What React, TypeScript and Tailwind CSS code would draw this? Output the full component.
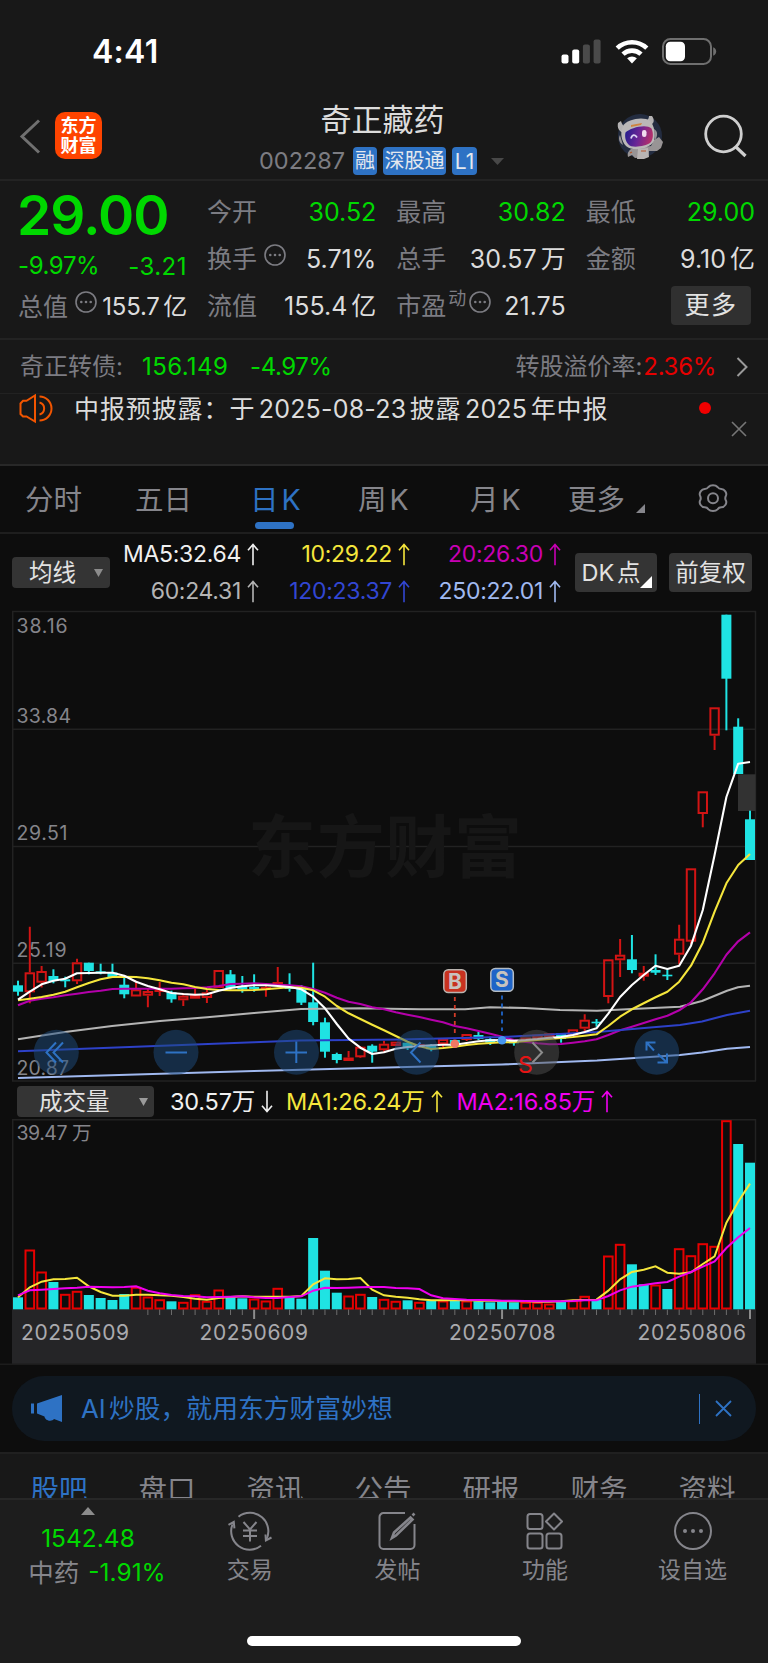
import type { ReactNode } from "react";
import { clsx } from "clsx";

const FIRST_X = 18;
const STEP = 732 / 62;
const barX = (i: number) => FIRST_X + i * STEP;

// [direction, high, body top, body bottom, low] in chart pixels
type Candle = ["u" | "d", number, number, number, number];

const candles: Candle[] = [
  ["d", 980.7, 985.3, 991.7, 995.7],
  ["u", 926.7, 972.3, 992.3, 1003.3],
  ["u", 966, 971, 982.7, 987.5],
  ["d", 969.3, 976, 981, 983.3],
  ["d", 976.7, 979.3, 981.3, 987.3],
  ["u", 958.7, 962.3, 981.3, 984],
  ["d", 962.7, 962.7, 971, 974.3],
  ["d", 963.7, 971.3, 973.3, 974.3],
  ["d", 963.7, 972.5, 977.3, 977.3],
  ["d", 977.3, 984.7, 994.3, 998.3],
  ["u", 980.7, 989.3, 996.5, 996.5],
  ["u", 988.3, 991, 995.7, 1007.3],
  ["u", 982, 989, 992, 996],
  ["d", 990.7, 992.3, 999.3, 1002.7],
  ["u", 993.3, 995.7, 1000.3, 1006],
  ["u", 987.7, 995, 998.7, 998.7],
  ["u", 989.3, 992.3, 998, 1003],
  ["u", 970, 970, 988, 988],
  ["d", 970, 974.3, 988.3, 990],
  ["d", 976, 986, 989.3, 992.7],
  ["d", 974.3, 987, 989, 991.7],
  ["u", 985, 987, 989.5, 996.7],
  ["u", 967, 982, 984, 984],
  ["d", 973.3, 987, 989, 991.7],
  ["d", 985, 989, 1002.7, 1005],
  ["d", 962.7, 1002.3, 1022, 1025.3],
  ["d", 1017.7, 1022.3, 1051.7, 1057.7],
  ["d", 1052.7, 1054, 1060, 1063.3],
  ["u", 1051, 1057.5, 1061, 1061],
  ["u", 1046, 1046.7, 1057.3, 1058],
  ["d", 1044.3, 1045.7, 1051.7, 1062.7],
  ["u", 1040.7, 1043.7, 1050.3, 1053],
  ["u", 1041.7, 1041.7, 1046, 1046],
  ["d", 1042.7, 1042.7, 1048.3, 1050],
  ["u", 1043, 1044, 1047, 1048],
  ["d", 1044, 1045.7, 1049.3, 1051.3],
  ["u", 1038.5, 1039, 1044.3, 1047.3],
  ["d", 1040, 1040, 1046, 1046],
  ["u", 1034, 1034, 1040, 1041],
  ["d", 1032, 1035, 1039, 1040],
  ["d", 1036.7, 1039, 1042.7, 1045],
  ["d", 1038, 1039.3, 1042.7, 1044],
  ["d", 1040, 1041, 1043.3, 1045.7],
  ["u", 1037.5, 1037.5, 1040.5, 1041],
  ["u", 1034.7, 1034.7, 1039, 1039],
  ["u", 1033.3, 1033.3, 1037.3, 1037.3],
  ["d", 1033, 1033.3, 1039, 1042.7],
  ["u", 1029.3, 1029.3, 1035.7, 1036],
  ["u", 1014.3, 1019.7, 1028.7, 1031],
  ["d", 1019, 1021.7, 1023.3, 1026.7],
  ["u", 959.3, 959.3, 997, 1003.3],
  ["u", 939, 954.7, 960.3, 977],
  ["d", 935, 959.3, 970, 973.3],
  ["u", 966, 972.7, 976.7, 980.7],
  ["d", 954.3, 970, 972.7, 975],
  ["d", 969.3, 974.7, 976.3, 980],
  ["u", 924.7, 938.7, 954.7, 964.3],
  ["u", 868.3, 868.3, 941.7, 944],
  ["u", 791.3, 791.3, 814, 827.3],
  ["u", 707.3, 707.3, 735.7, 750],
  ["d", 614.7, 614.7, 678.7, 730.3],
  ["d", 718.3, 726.7, 774, 774],
  ["d", 810.7, 819.3, 860, 860],
];

const ma5 = [
  999.7, 991.7, 984.3, 980.7, 978.7, 973.3, 973, 972.7, 972.7, 975.7, 981.7, 986, 989.3, 993, 994, 994.7, 994.3,
  990.7, 988, 986.3, 985.3, 985.3, 986, 987, 989.3, 996.7, 1008.3, 1024, 1038.7, 1047.7, 1054, 1052.3, 1048.7, 1047,
  1046, 1045.3, 1044.7, 1044.7, 1043, 1041.3, 1040.3, 1040, 1040.7, 1040, 1039, 1037.7, 1037, 1035, 1032, 1028.3,
  1013.7, 997, 985, 975, 965.7, 969, 965.7, 945.7, 910, 855, 797, 763.7, 762,
];

const ma10 = [
  1000.3, 998.7, 997, 994.7, 991.7, 987.3, 983, 979.3, 977, 976.7, 977, 978.3, 980.3, 982.7, 984.3, 987, 989, 990,
  990.3, 990.3, 990, 989.3, 988.3, 987.3, 987.7, 990.3, 996.7, 1006, 1013.3, 1019, 1024.7, 1030.3, 1036, 1041.7,
  1046.3, 1049, 1048, 1046.7, 1045, 1043.7, 1043, 1042.3, 1042.3, 1041, 1040, 1039, 1038, 1037, 1035.7, 1034.3, 1026,
  1016.7, 1009.3, 1003.3, 997.3, 991.7, 981.7, 965.7, 942.7, 911.7, 883.3, 865, 854,
];

const ma20 = [
  1005.3, 1000.7, 998.7, 997.3, 995.3, 993.7, 992, 990.7, 989, 988.7, 988.7, 988.7, 988.7, 988.7, 988.3, 988, 987.3,
  986, 984, 983.7, 983.3, 984, 984.7, 985.3, 986.3, 989, 992.7, 997.7, 1001.7, 1004, 1007.3, 1009.3, 1012.3, 1014.7,
  1017, 1019.7, 1022.3, 1026, 1028.3, 1031, 1033.7, 1036.7, 1040, 1042, 1043.3, 1044.3, 1044, 1042.7, 1041.3, 1039.3,
  1035, 1030.3, 1026.7, 1023, 1019.3, 1015.7, 1010.3, 1002.3, 989.3, 973.3, 954.7, 941.3, 932.3,
];

const ma60 =
  "18,1039.3 65,1032 112,1026 160,1021 207,1017.3 254,1013 301,1009 360,1008.3 420,1009.3 465,1009.3 490,1007.3 525,1008 560,1010 597,1010.7 632,1009 680,1006.7 702,1001 727,990.7 738,987.3 750,985.7";
const ma120 = "18,1051.3 254,1042.3 300,1040.5 400,1039.5 502,1037 597,1032 680,1025 702,1021.5 727,1015 750,1010.7";
const ma250 = "18,1078 254,1071 502,1064.5 597,1060.5 680,1055 702,1052.5 727,1048.8 750,1047";

// top edge of each volume bar
const volumes = [
  1297.3, 1250, 1272, 1282, 1294.3, 1291.3, 1295, 1298, 1300, 1294, 1287.3, 1297, 1299.7, 1301.3, 1302.3, 1294.7,
  1301.3, 1290, 1297.3, 1298.3, 1299, 1301, 1288.3, 1296.7, 1298.7, 1238, 1270.7, 1292.7, 1296, 1294.3, 1297, 1299.3,
  1301.3, 1300.3, 1302.3, 1301, 1301, 1301, 1301, 1301.3, 1302.3, 1301.3, 1302.3, 1302.3, 1302.3, 1304, 1302, 1300.7,
  1296.3, 1300, 1256, 1244.3, 1264.3, 1284.3, 1285, 1289, 1248.7, 1255.7, 1243.7, 1246.3, 1120.7, 1144, 1162.7,
];
// 1 = hollow red bar, 0 = filled
const volumeFlags = [
  0, 1, 1, 0, 1, 1, 0, 0, 0, 0, 1, 1, 1, 0, 1, 1, 1, 1, 0, 0, 1, 1, 1, 0, 0, 0, 0, 0, 1, 1, 0, 1, 1, 0, 1, 0, 1, 0, 1,
  0, 0, 0, 0, 1, 1, 1, 0, 1, 1, 0, 1, 1, 0, 0, 1, 0, 1, 1, 1, 1, 1, 0, 0,
];

// volume averages, offsets from the panel header at @3x
const volMa1 = [
  652, 622, 605, 598, 597, 593, 619, 636, 647, 647, 644, 644, 646, 647, 651, 656, 659, 654, 651, 649, 650, 650, 650,
  650, 648, 613, 595, 598, 597, 594, 629, 646, 650, 653, 658, 661, 661, 661, 660, 662, 662, 663, 664, 664, 665, 665,
  664, 661, 660, 659, 632, 598, 576, 569, 559, 578, 581, 577, 552, 529, 428, 365, 311,
];
const volMa2 = [
  646, 631, 629, 627, 625, 623, 620, 621, 622, 621, 619, 632, 640, 645, 648, 649, 652, 651, 650, 649, 652, 654, 654,
  651, 649, 632, 623, 624, 623, 622, 621, 621, 624, 625, 627, 646, 655, 657, 659, 660, 661, 662, 662, 663, 664, 664,
  664, 663, 661, 661, 648, 631, 620, 615, 610, 606, 590, 576, 560, 544, 504, 472, 444,
];

const toPoints = (ys: number[]) => ys.map((y, i) => `${barX(i).toFixed(1)},${y}`).join(" ");
const toVolPoints = (vs: number[]) => toPoints(vs.map((v) => 1080 + v / 3));

function Arrow({ down }: { down?: boolean }) {
  return (
    <svg className={clsx("h-[23px] w-[12px] shrink-0", down && "rotate-180")} viewBox="0 0 12 22" fill="none" stroke="currentColor" strokeWidth="1.6">
      <path d="M6 21.8V1M1 6.8L6 1l5 5.8" />
    </svg>
  );
}

function Caret({ className }: { className?: string }) {
  return (
    <svg className={className} viewBox="0 0 10 9" fill="currentColor" preserveAspectRatio="none">
      <path d="M0 0h10L5 9z" />
    </svg>
  );
}

function InfoDots() {
  return (
    <svg className="size-[22px] shrink-0 text-[#7c7c82]" viewBox="0 0 22 22" fill="currentColor">
      <circle cx="11" cy="11" r="10" fill="none" stroke="currentColor" strokeWidth="1.6" />
      <circle cx="6.3" cy="11" r="1.3" />
      <circle cx="11" cy="11" r="1.3" />
      <circle cx="15.7" cy="11" r="1.3" />
    </svg>
  );
}

function StatusBar() {
  return (
    <div className="flex h-[102px] items-center justify-between pl-[92px] pr-[51px]">
      <span className="pt-[2px] text-[32px] font-semibold tracking-[0.3px] text-white">4:41</span>
      <div className="flex items-center">
        <svg className="h-[25px] w-[40px]" viewBox="0 0 40 25">
          <rect x="0.5" y="15.5" width="7" height="9" rx="2" fill="#fff" />
          <rect x="11.2" y="10.5" width="7" height="14" rx="2" fill="#fff" />
          <rect x="21.9" y="5.5" width="7" height="19" rx="2" fill="#4a4a4a" />
          <rect x="32.6" y="0.5" width="7" height="24" rx="2" fill="#4a4a4a" />
        </svg>
        <svg className="ml-[14px] h-[25px] w-[34px]" viewBox="0 0 34 25" fill="none" stroke="#fff" strokeWidth="4.6">
          <path d="M2.2 9.2a21.5 21.5 0 0 1 29.6 0" />
          <path d="M8 15.2a13 13 0 0 1 18 0" />
          <path d="M17 24.4l-4.9-5.1a7.2 7.2 0 0 1 9.8 0z" fill="#fff" stroke="none" />
        </svg>
        <svg className="ml-[13px] h-[27px] w-[55px]" viewBox="0 0 55 27">
          <rect x="1" y="1" width="48" height="25" rx="7.5" fill="none" stroke="#6f6f6f" strokeWidth="2" />
          <rect x="3.8" y="3.8" width="19.2" height="19.4" rx="4.5" fill="#fff" />
          <path d="M51.2 9.3c4 1.4 4 7 0 8.4z" fill="#6f6f6f" />
        </svg>
      </div>
    </div>
  );
}

function Robot() {
  return (
    <svg className="h-[48px] w-[50px]" viewBox="0 0 50 48">
      <defs>
        <linearGradient id="visor" x1="0" y1="0" x2="1" y2="0.2">
          <stop offset="0" stopColor="#1d1d8c" />
          <stop offset="0.55" stopColor="#6a2596" />
          <stop offset="1" stopColor="#b02f6c" />
        </linearGradient>
      </defs>
      <circle cx="24" cy="23" r="22" fill="#232c40" />
      <path d="M15 36c-3 2-4 5-3 8l4-2 3 3 13-1 1-6 8 0 4-3 2-6-4-5-5 3-3 6z" fill="#989495" />
      <path d="M22 36l10-1 1 9-5 2-7 0z" fill="#b8b4b3" />
      <path d="M2 10c-1 5 1 8 5 10l3-6c-2-1-4-2-5-6zM36 3c3 4 2 8-2 9l-6-4c3 0 5-2 5-5z" fill="#b4b2b3" />
      <path d="M7 13C11 6 28 3 34 8c4 4 6 13 4 20-4 8-21 11-28 5-5-5-6-14-3-20z" fill="#bbb8b8" />
      <path d="M9.500 19.500c5-5 21-9 26-4 2 4 2 11-1 14-5 4-19 6-22 2-3-3-4-8-3-12z" fill="url(#visor)" />
      <path d="M15 25.500c1-4 4-4.500 6-1" stroke="#dcd2f2" strokeWidth="1.800" fill="none" />
      <rect x="26" y="17" width="4.500" height="7" rx="2.200" fill="#f0dcee" />
      <path d="M15 12l11-2-1 2-10 2z" fill="#cf8440" />
      <path d="M4 22c-2 3-1 8 3 10zM38 16c4 2 4 7 1 11z" fill="#959295" />
      <path d="M14 40l2-1M25 38h5" stroke="#b5552c" strokeWidth="1.200" />
    </svg>
  );
}

function Header() {
  return (
    <div className="flex h-[79px] border-b-2 border-[#232323]">
      <div className="flex w-[259px] items-start pl-[19px] pt-[10px]">
        <svg className="mt-[7px] h-[36px] w-[22px]" viewBox="0 0 22 36" fill="none" stroke="#707070" strokeWidth="3">
          <path d="M20 1.500L3 17.500l17 16" />
        </svg>
        <div className="ml-[14px] flex size-[47px] flex-col items-center justify-center gap-[1px] rounded-[10px] bg-[#ff4400] text-[18px] font-bold leading-[19px] text-white">
          <span>东方</span>
          <span>财富</span>
        </div>
      </div>
      <div className="flex w-[247px] flex-col">
        <div className="h-[36px] text-center text-[31px] leading-[35px] text-[#dcdcdc]">奇正藏药</div>
        <div className="mt-[9px] flex h-[28px] items-center text-[23.500px] leading-none">
          <span className="w-[94px] text-[#7c7c82]">002287</span>
          <span className="flex h-[28px] w-[24px] items-center justify-center rounded-[4px] bg-[#2e72c4] text-[20px] text-[#e4e8ee]">融</span>
          <span className="ml-[6px] flex h-[28px] w-[63px] items-center justify-center rounded-[4px] bg-[#2e72c4] text-[20px] text-[#e4e8ee]">深股通</span>
          <span className="ml-[6px] flex h-[28px] w-[25px] shrink-0 items-center justify-center rounded-[4px] bg-[#2e72c4] text-[21px] text-[#e4e8ee]">L1</span>
          <Caret className="ml-[14px] h-[7px] w-[13px] shrink-0 text-[#484848]" />
        </div>
      </div>
      <div className="flex flex-1 items-start pl-[110px] pt-[11px]">
        <Robot />
        <svg className="ml-[38px] mt-[1px] h-[44px] w-[44px]" viewBox="0 0 44 44" fill="none" stroke="#cfcfcf" strokeWidth="2.800">
          <circle cx="19.500" cy="20" r="17.800" />
          <path d="M32 33l9.500 9" strokeWidth="3.200" />
        </svg>
      </div>
    </div>
  );
}

function Cell({ label, extra, value, green }: { label: string; extra?: ReactNode; value: string; green?: boolean }) {
  return (
    <div className="flex h-[47px] items-center justify-between">
      <div className="flex items-center">
        <span className="text-[25px] text-[#7c7c82]">{label}</span>
        {extra}
      </div>
      <span className={clsx("text-[25px] [word-spacing:-3px]", green ? "text-[#00d800]" : "text-[#dcdcdc]")}>{value}</span>
    </div>
  );
}

function Quote() {
  return (
    <div className="flex h-[159px] border-b-2 border-[#232323] pl-[18px] pr-[13px] pt-[8px] leading-none">
      <div className="mr-[20px] w-[169px]">
        <div className="-ml-[1px] flex h-[52px] items-center text-[55px] font-semibold tracking-[-1px] text-[#00d800]">29.00</div>
        <div className="flex h-[50px] items-center justify-between text-[24px] text-[#00d800]">
          <span className="tracking-[-0.4px]">-9.97%</span>
          <span className="pt-[2px] tracking-[0.500px]">-3.21</span>
        </div>
        <div className="flex h-[32px] items-center text-[25px] text-[#7c7c82]">
          <span>总值</span>
          <span className="-mt-[10px] ml-[7px]">
            <InfoDots />
          </span>
          <span className="ml-auto text-[24px] tracking-[-0.2px] text-[#dcdcdc] [word-spacing:-3px]">155.7 亿</span>
        </div>
      </div>
      <div className="grid flex-1 grid-cols-3 gap-x-[20px]">
        <div>
          <Cell label="今开" value="30.52" green />
          <Cell
            label="换手"
            value="5.71%"
            extra={
              <span className="-mt-[9px] ml-[7px]">
                <InfoDots />
              </span>
            }
          />
          <Cell label="流值" value="155.4 亿" />
        </div>
        <div>
          <Cell label="最高" value="30.82" green />
          <Cell label="总手" value="30.57 万" />
          <Cell
            label="市盈"
            value="21.75"
            extra={
              <span className="-mt-[10px] ml-[2px] flex items-center gap-[3px]">
                <span className="-mt-[5px] text-[18px] text-[#7c7c82]">动</span>
                <InfoDots />
              </span>
            }
          />
        </div>
        <div>
          <Cell label="最低" value="29.00" green />
          <Cell label="金额" value="9.10 亿" />
          <div className="flex h-[47px] items-center justify-end pb-[2px] pr-[4px]">
            <button className="h-[39px] w-[80px] rounded-[4px] bg-[#303030] text-[25px] tracking-[1.500px] text-[#e2e2e2]">更多</button>
          </div>
        </div>
      </div>
    </div>
  );
}

function BondRow() {
  return (
    <div className="flex h-[54px] items-center border-b border-[#222] pl-[20px] pr-[20px] pt-[1px] text-[24px] leading-none text-[#7c7c82]">
      <span className="w-[122px]">奇正转债:</span>
      <span className="w-[108px] tracking-[0.400px] text-[#00d800]">156.149</span>
      <span className="tracking-[-0.400px] text-[#00d800]">-4.97%</span>
      <span className="ml-auto">转股溢价率:</span>
      <span className="ml-[1px] tracking-[-0.300px] text-[#e60000]">2.36%</span>
      <svg className="ml-[20px] h-[20px] w-[12px]" viewBox="0 0 12 20" fill="none" stroke="#9a9a9a" strokeWidth="2">
        <path d="M1.500 1l9 9-9 9" />
      </svg>
    </div>
  );
}

function Notice() {
  return (
    <div className="flex h-[72px] items-start border-b-2 border-[#282828] pl-[19px]">
      <svg className="h-[30px] w-[34px]" viewBox="0 0 34 30" fill="none" stroke="#f25500" strokeWidth="2">
        <path d="M16 1.500v26L7.500 22.500H4L1.500 20V9.500L4 6.800h3.500z" />
        <path d="M20.500 2.500a12 12 0 0 1 0 24M20.500 8.500a6.200 6.200 0 0 1 0 12" />
      </svg>
      <span className="ml-[21px] h-[29px] whitespace-nowrap text-[25px] leading-[30px] tracking-[0.900px] text-[#dcdcdc] [word-spacing:-4.500px]">
        中报预披露：于 <span className="tracking-[0.200px]">2025-08-23</span> 披露 <span className="tracking-[0.200px]">2025</span> 年中报
      </span>
      <span className="ml-auto mt-[8px] size-[12px] rounded-full bg-[#f00000]" />
      <svg className="ml-[20px] mr-[21px] mt-[27px] size-[16px]" viewBox="0 0 16 16" stroke="#767676" strokeWidth="1.600">
        <path d="M1 1l14 14M15 1L1 15" />
      </svg>
    </div>
  );
}

function PeriodTabs() {
  return (
    <div className="flex h-[68px] items-start border-b-2 border-[#1e1e1e] pt-[16px] text-[28.500px] leading-[35px] text-[#85858b] [word-spacing:-5px]">
      <span className="w-[110px] pl-[25px]">分时</span>
      <span className="w-[140px] pl-[25px]">五日</span>
      <span className="flex w-[108px] flex-col text-[#2e72c4]">
        <span className="whitespace-pre">日 K</span>
        <span className="ml-[5px] mt-[5px] h-[7px] w-[39px] rounded-full bg-[#2e72c4]" />
      </span>
      <span className="w-[112px]">周 K</span>
      <span className="w-[98px]">月 K</span>
      <span className="flex w-[128px]">
        更多
        <svg className="ml-[11px] mt-[22px] size-[9px]" viewBox="0 0 9 9" fill="currentColor">
          <path d="M9 0v9H0z" />
        </svg>
      </span>
      <svg className="h-[32px] w-[34px]" viewBox="0 0 34 32" fill="none" stroke="currentColor" strokeWidth="2">
        <path d="M12.500 3C14.500 .6 19.500 .6 21.500 3c1 1.400 2 2 3.800 2 3.200 0 6 4 4.600 6.800-.9 1.700-.9 3 0 4.700 1.400 2.800-1.400 6.800-4.600 6.800-1.800 0-2.800.6-3.800 2-2 2.400-7 2.400-9 0-1-1.400-2-2-3.800-2-3.200 0-6-4-4.600-6.800.9-1.700.9-3 0-4.700C2.700 9 5.500 5 8.700 5c1.800 0 2.800-.6 3.800-2z" transform="translate(0 2)" />
        <circle cx="17" cy="16.200" r="5" />
      </svg>
    </div>
  );
}

function MaItem({ className, children, down }: { className?: string; children: ReactNode; down?: boolean }) {
  return (
    <span className={clsx("flex items-center justify-end gap-[6px] whitespace-nowrap", className)}>
      {children}
      <Arrow down={down} />
    </span>
  );
}

function MaHeader() {
  return (
    <div className="flex h-[76px] items-center pl-[12px] pr-[16px] pt-[1px] leading-none">
      <button className="flex h-[31px] w-[98px] items-center rounded-[4px] bg-[#343434] pl-[17px] text-[23.500px] text-[#e2e2e2]">
        均线
        <Caret className="ml-[18px] h-[8px] w-[9px] text-[#8c8c8c]" />
      </button>
      <div className="grid h-[74px] w-[451px] grid-cols-[149px_151px_151px] pt-[1px] text-[23px] tracking-[-0.300px]">
        <MaItem className="text-[#f0f0f0]">MA5:32.64</MaItem>
        <MaItem className="text-[#f5e63c]">10:29.22</MaItem>
        <MaItem className="text-[#c800b4]">20:26.30</MaItem>
        <MaItem className="text-[#b4b4b4]">60:24.31</MaItem>
        <MaItem className="text-[#3246d2]">120:23.37</MaItem>
        <MaItem className="text-[#a0b9f0]">250:22.01</MaItem>
      </div>
      <button className="relative ml-auto h-[39px] w-[82px] rounded-[4px] bg-[#343434] pr-[10px] text-[23.500px] text-[#e2e2e2] [word-spacing:-4px]">
        DK 点
        <svg className="absolute bottom-[4px] right-[5px] size-[12px]" viewBox="0 0 12 12" fill="#fff">
          <path d="M12 0v12H0z" />
        </svg>
      </button>
      <button className="ml-[12px] h-[39px] w-[83px] rounded-[4px] bg-[#343434] text-[23.500px] text-[#e2e2e2]">前复权</button>
    </div>
  );
}

const priceLabels = [
  { label: "38.16", y: 633, width: 51 },
  { label: "33.84", y: 723, width: 54.5 },
  { label: "29.51", y: 840, width: 51 },
  { label: "25.19", y: 957, width: 50 },
  { label: "20.87", y: 1074.5, width: 52.5 },
];

function PriceChart() {
  return (
    <svg className="block h-[472px] w-[768px]" viewBox="0 610 768 472" fill="none">
      <g stroke="#222" strokeWidth="1.500">
        <path d="M12 611.500H756M12 729.300H756M12 846.500H756M12 963.300H756M12 1081H756M12.700 611V1081M755.500 611V1081" />
      </g>
      <text x="248" y="872" fontSize="68" fontWeight="700" fill="#161616" textLength="274">东方财富</text>
      <rect x="738" y="774.300" width="17.500" height="36.700" fill="#323232" />

      <g fontSize="19.500" fill="#85858b">
        {priceLabels.map((p) => (
          <text key={p.label} x="16.500" y={p.y} textLength={p.width}>{p.label}</text>
        ))}
      </g>

      {candles.map(([dir, high, top, bottom, low], i) => {
        const x = barX(i);
        if (dir === "d") {
          return (
            <g key={i} fill="#1fe3e3">
              <rect x={x - 1} y={high} width="2" height={low - high} />
              <rect x={x - 5} y={top} width="10" height={bottom - top} />
            </g>
          );
        }
        return (
          <g key={i} stroke="#d21414" strokeWidth="2">
            <path d={`M${x} ${high}V${top}M${x} ${bottom}V${low}`} />
            <rect x={x - 4.200} y={top + 1} width="8.400" height={Math.max(bottom - top - 2, 0.500)} />
          </g>
        );
      })}

      <g strokeWidth="2.100" strokeLinejoin="round">
        <polyline points={ma60} stroke="#b4b4b4" />
        <polyline points={ma250} stroke="#a0b9f0" />
        <polyline points={toPoints(ma20)} stroke="#b400aa" />
        <polyline points={ma120} stroke="#2d41c8" />
        <polyline points={toPoints(ma10)} stroke="#f5e63c" />
        <polyline points={toPoints(ma5)} stroke="#fff" />
      </g>

      {/* trade markers */}
      <path d="M454.800 997V1033" stroke="#d23c28" strokeWidth="1.800" strokeDasharray="4 4" />
      <path d="M502 995.500V1031" stroke="#1e64c8" strokeWidth="1.800" strokeDasharray="4 4" />
      <circle cx="454.800" cy="1043.700" r="4.300" fill="#f07864" />
      <circle cx="502" cy="1040.300" r="4.300" fill="#4696f0" />
      <rect x="443.800" y="969.700" width="22.500" height="22.800" rx="4.500" fill="#c83220" stroke="#b9b4b0" strokeWidth="1.500" />
      <rect x="490.800" y="968.500" width="22.500" height="22.800" rx="4.500" fill="#1e64c8" stroke="#b4bcc4" strokeWidth="1.500" />
      <g fontSize="21" fontWeight="700" fill="#c8c3be" textAnchor="middle">
        <text x="455" y="988.800">B</text>
        <text x="502" y="987.300">S</text>
      </g>

      {/* floating controls */}
      <g fill="#1e4b7d" fillOpacity="0.500">
        <circle cx="56.300" cy="1052.300" r="22.500" />
        <circle cx="176" cy="1052.300" r="22.500" />
        <circle cx="296.500" cy="1052.300" r="22.500" />
        <circle cx="416.600" cy="1052.300" r="22.500" />
        <circle cx="656.700" cy="1052.300" r="22.500" />
        <circle cx="536.700" cy="1052.300" r="22.500" fill="#505050" />
      </g>
      <g stroke="#2e72c4" strokeWidth="2">
        <path d="M56 1042.500L46.500 1052.500l9.500 10M63 1042.500L53.500 1052.500l9.500 10" />
        <path d="M165.500 1052.500h21.500" />
        <path d="M285.500 1052.500h21.500M296.300 1041.500v21.500" />
        <path d="M420.500 1042.500L411 1052.500l9.500 10" />
        <path d="M646.500 1050.500v-8h9M646.500 1042.500l7.500 8M667 1053.500v9h-9.500M667 1062.500l-9-8.500" />
        <path d="M532.500 1042.500l9.500 10-9.500 10" stroke="#8c8c8c" />
      </g>
      <text x="518" y="1072.500" fontSize="23" fill="#e61414">S</text>
    </svg>
  );
}

function VolumeHeader() {
  return (
    <div className="flex h-[37px] items-center pl-[17px] pt-[2px] text-[23.500px] leading-none tracking-[-0.200px]">
      <button className="flex h-[31px] w-[137px] items-center rounded-[4px] bg-[#343434] pl-[22px] pt-[1px] text-[23.500px] tracking-normal text-[#e2e2e2]">
        成交量
        <Caret className="ml-[29px] h-[8px] w-[9px] text-[#9a9a9a]" />
      </button>
      <MaItem className="ml-[16px] text-[#f0f0f0]" down>30.57万</MaItem>
      <MaItem className="ml-[13px] text-[#f5e63c]">MA1:26.24万</MaItem>
      <MaItem className="ml-[14px] text-[#f000f0]">MA2:16.85万</MaItem>
    </div>
  );
}

function VolumeChart() {
  return (
    <svg className="block h-[246px] w-[768px]" viewBox="0 1119 768 246" fill="none">
      <path d="M12 1119.700H756M12.700 1119V1309M755.500 1119V1309" stroke="#222" strokeWidth="1.500" />
      <rect x="12" y="1309" width="744" height="55" fill="#252527" />
      <path d="M0 1364.300H768" stroke="#1c1c1c" strokeWidth="1.500" />
      <text x="16.500" y="1140" fontSize="19.500" fill="#85858b" textLength="75">39.47 万</text>

      {volumes.map((top, i) =>
        volumeFlags[i] ? (
          <rect key={i} x={barX(i) - 4.300} y={top + 0.500} width="8.600" height={1308 - top} stroke="#e60000" strokeWidth="2" />
        ) : (
          <rect key={i} x={barX(i) - 5} y={top} width="10" height={1309.300 - top} fill="#1fe3e3" />
        ),
      )}
      <polyline points={toVolPoints(volMa1)} stroke="#f5e63c" strokeWidth="2" />
      <polyline points={toVolPoints(volMa2)} stroke="#f000f0" strokeWidth="2" />

      {volumes.map((_, i) => {
        if (i < 11) return null;
        const major = i === 20 || i === 41 || i === 62;
        return (
          <path key={i} d={`M${barX(i)} 1309.500V${major ? 1319 : 1315}`} stroke={major ? "#8c8c8c" : "#6e6e6e"} strokeWidth={major ? 2 : 1} />
        );
      })}
      <g fontSize="21" fill="#aaaaae">
        <text x="21" y="1340.300" textLength="108">20250509</text>
        <text x="199.500" y="1340.300" textLength="108.500">20250609</text>
        <text x="449" y="1340.300" textLength="106.500">20250708</text>
        <text x="637.500" y="1340.300" textLength="108.500">20250806</text>
      </g>
    </svg>
  );
}

function AiBanner() {
  return (
    <div className="h-[87px] px-[12px] pt-[11px]">
      <div className="flex h-[65px] items-center rounded-full bg-[#101820] pl-[19px] pr-[24px] leading-none text-[#2e72c4]">
        <svg className="h-[27px] w-[31px]" viewBox="0 0 31 27" fill="currentColor">
          <path d="M0 8.500h3v10H0zM6 8.500L31 0v27l-8-3c-2 3-9 2-9.500-2.500L6 18.500z" />
        </svg>
        <span className="ml-[19px] text-[25.800px] [word-spacing:-4px]">AI 炒股，就用东方财富妙想</span>
        <span className="ml-auto h-[30px] w-[1.500px] bg-[#2e72c4]" />
        <svg className="ml-[15px] size-[17px]" viewBox="0 0 17 17" stroke="currentColor" strokeWidth="1.800">
          <path d="M1 1l15 15M16 1L1 16" />
        </svg>
      </div>
    </div>
  );
}

const sections = ["股吧", "盘口", "资讯", "公告", "研报", "财务", "资料"];

function SectionTabs() {
  return (
    <div className="grid h-[46px] grid-cols-7 overflow-hidden border-t-2 border-[#202020] bg-[#181818] pl-[5px] pr-[7px] pt-[16px]">
      {sections.map((s, i) => (
        <span key={s} className={clsx("text-center text-[28.500px] leading-[39px]", i === 0 ? "text-[#2e72c4]" : "text-[#85858b]")}>
          {s}
        </span>
      ))}
    </div>
  );
}

function NavItem({ label, children }: { label: string; children: ReactNode }) {
  return (
    <div className="flex w-[147.600px] flex-col items-center">
      <svg className="h-[40px] w-[44px] overflow-visible" viewBox="0 0 44 40" fill="none" stroke="#85858b" strokeWidth="2">
        {children}
      </svg>
      <span className="mt-[6px] text-[23px] leading-[26px] text-[#85858b]">{label}</span>
    </div>
  );
}

function BottomNav() {
  return (
    <div className="flex h-[165px] flex-col justify-between border-t-2 border-[#272727] bg-[#1d1d1d] pb-[17px]">
      <div className="flex">
        <div className="flex w-[176px] flex-col items-center text-[24.500px] leading-none text-[#00d800]">
          <svg className="mt-[7px] h-[8px] w-[14px]" viewBox="0 0 14 8" fill="#8c8c8c">
            <path d="M7 0l7 8H0z" />
          </svg>
          <span className="mt-[11px] h-[24px]">1542.48</span>
          <span className="mt-[10px] flex whitespace-nowrap pl-[18px]">
            <span className="mr-[9px] text-[25.500px] text-[#85858b]">中药</span>-1.91%
          </span>
        </div>
        <div className="flex pt-[11px]">
          <NavItem label="交易">
            <path d="M10.500 5.700A18.500 18.500 0 0 1 37.900 29.500M33 34.800A18.500 18.500 0 0 1 4.500 13.300" />
            <path d="M0.500 13.800L5.800 10.800l.6 6.500M43.500 26.500L37.900 29.500l-.4-6" />
            <path d="M15.500 11l6.500 7.500 6.500-7.500M22 18.500v12M15 19.500h14M15 25h14" />
          </NavItem>
          <NavItem label="发帖">
            <path d="M30 2H8.500a4 4 0 0 0-4 4v28a4 4 0 0 0 4 4h27a4 4 0 0 0 4-4V13" />
            <path d="M17 27l2-5.500L35.500 6.500l2 2L21 24.500zM37.500 4.500l2-2" strokeWidth="2.600" />
          </NavItem>
          <NavItem label="功能">
            <rect x="4.500" y="3" width="15" height="15" rx="2.500" />
            <rect x="4.500" y="22.500" width="15" height="15" rx="2.500" />
            <rect x="23.500" y="22.500" width="15" height="15" rx="2.500" />
            <path d="M31 2.500l8 8-8 8-8-8z" strokeLinejoin="round" />
          </NavItem>
          <NavItem label="设自选">
            <circle cx="22" cy="20" r="18" />
            <g fill="#85858b" stroke="none">
              <circle cx="14" cy="20" r="2" />
              <circle cx="22" cy="20" r="2" />
              <circle cx="30" cy="20" r="2" />
            </g>
          </NavItem>
        </div>
      </div>
      <div className="mx-auto h-[10px] w-[274px] rounded-full bg-white" />
    </div>
  );
}

export default function App() {
  return (
    <div className="h-[1663px] w-[768px] overflow-hidden bg-[#0d0d0d] font-['Inter','Noto_Sans_CJK_SC',sans-serif]">
      <div className="bg-[#181818]">
        <StatusBar />
        <Header />
        <Quote />
        <BondRow />
        <Notice />
      </div>
      <PeriodTabs />
      <MaHeader />
      <PriceChart />
      <VolumeHeader />
      <VolumeChart />
      <AiBanner />
      <SectionTabs />
      <BottomNav />
    </div>
  );
}
